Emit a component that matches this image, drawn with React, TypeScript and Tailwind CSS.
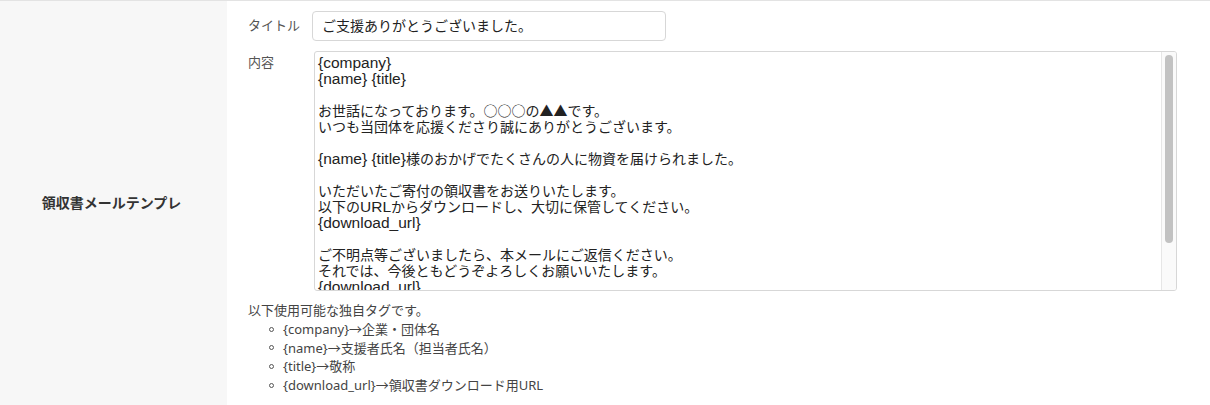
const bodyLines = [
  "{company}",
  "{name} {title}",
  "",
  "お世話になっております。○○○の▲▲です。",
  "いつも当団体を応援くださり誠にありがとうございます。",
  "",
  "{name} {title}様のおかげでたくさんの人に物資を届けられました。",
  "",
  "いただいたご寄付の領収書をお送りいたします。",
  "以下のURLからダウンロードし、大切に保管してください。",
  "{download_url}",
  "",
  "ご不明点等ございましたら、本メールにご返信ください。",
  "それでは、今後ともどうぞよろしくお願いいたします。",
  "{download_url}",
  "",
];

const tags = [
  "{company}→企業・団体名",
  "{name}→支援者氏名（担当者氏名）",
  "{title}→敬称",
  "{download_url}→領収書ダウンロード用URL",
];

const uiFont = "font-['Liberation_Sans','Noto_Sans_CJK_JP',sans-serif]";

// latin runs in the reference font render wider than Arial, so bump them
function MixedLine({ text }: { text: string }) {
  const parts = text.split(/([\x20-\x7e]+)/).filter((p) => p !== "");
  return (
    <div className="h-[16px] leading-[16px]">
      {parts.map((p, i) =>
        /^[\x20-\x7e]+$/.test(p) ? (
          <span key={i} className="font-['Liberation_Sans',sans-serif] text-[15.5px]">
            {p}
          </span>
        ) : (
          <span key={i}>{p}</span>
        )
      )}
    </div>
  );
}

export default function App() {
  return (
    <div className="w-[1210px] min-h-[405px] flex border-t border-[#e3e3e3] bg-white">
      <div className={`w-[227px] shrink-0 bg-[#f7f7f7] flex items-center justify-center pr-[4px] text-[14px] font-bold text-[#333] ${uiFont}`}>
        領収書メールテンプレ
      </div>

      <div className="flex-1 pl-[21px] pt-[10px] pb-[8px]">
        <div className="flex items-center">
          <span className={`w-[64px] text-[13px] text-[#555] ${uiFont}`}>タイトル</span>
          <div className={`w-[354px] h-[30px] flex items-center pl-[9px] border border-[#d7d7d7] rounded-[4px] text-[14px] text-[#222] ${uiFont}`}>
            ご支援ありがとうございました。
          </div>
        </div>

        <div className="flex mt-[10px]">
          <span className={`w-[66px] pt-[2px] text-[13px] text-[#555] ${uiFont}`}>内容</span>
          <div className="w-[863px] h-[240px] flex border border-[#d7d7d7] rounded-[3px] overflow-hidden">
            <div className="flex-1 pl-[3px] pt-[2px] text-[14px] text-[#222] whitespace-pre overflow-hidden font-['Noto_Sans_CJK_JP',sans-serif]">
              {bodyLines.map((line, i) => (
                <MixedLine key={i} text={line} />
              ))}
            </div>
            <div className="w-[15px] shrink-0 bg-[#fafafa] border-l border-[#e6e6e6] pt-[3px] pl-[3px]">
              <div className="w-[8px] h-[188px] rounded-full bg-[#c2c2c2]" />
            </div>
          </div>
        </div>

        <div className="mt-[10px] text-[13px] leading-[18.75px] text-[#444] font-['Noto_Sans','Noto_Sans_CJK_JP',sans-serif]">
          <div>以下使用可能な独自タグです。</div>
          <ul>
            {tags.map((t) => (
              <li key={t} className="flex items-center">
                <span className="ml-[21px] mr-[9px] w-[5px] h-[5px] rounded-full border border-[#555]" />
                {t}
              </li>
            ))}
          </ul>
        </div>
      </div>
    </div>
  );
}
